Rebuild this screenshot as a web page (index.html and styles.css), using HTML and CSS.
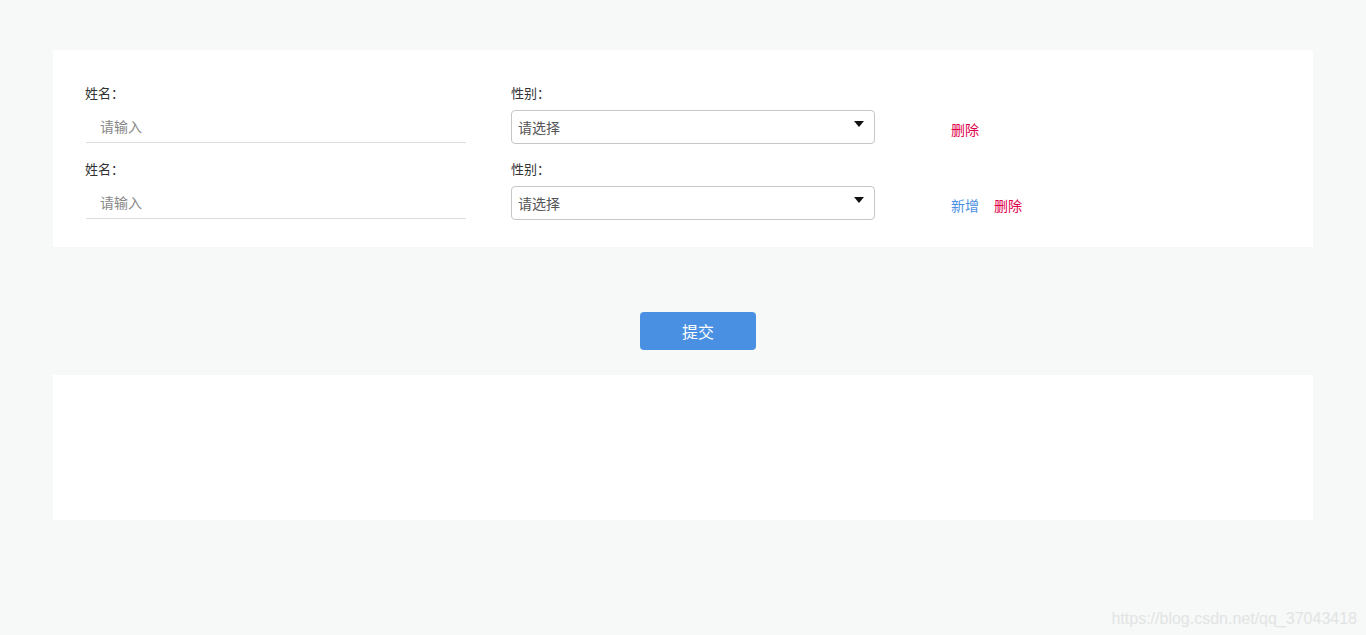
FILE: index.html
```html
<!DOCTYPE html>
<html lang="zh">
<head>
<meta charset="utf-8">
<title>表单</title>
<link rel="stylesheet" href="styles.css">
</head>
<body>
<div class="page">
  <div class="card form-card">
    <div class="row">
      <div class="field name-field">
        <div class="label">姓名：</div>
        <div class="text-input">请输入</div>
      </div>
      <div class="field sex-field">
        <div class="label">性别：</div>
        <div class="select">
          <span>请选择</span>
          <svg class="caret" width="10" height="6" viewBox="0 0 10 6"><path d="M0 0H10L5 6Z" fill="#111"/></svg>
        </div>
      </div>
      <div class="actions">
        <a class="link del">删除</a>
      </div>
    </div>
    <div class="row">
      <div class="field name-field">
        <div class="label">姓名：</div>
        <div class="text-input">请输入</div>
      </div>
      <div class="field sex-field">
        <div class="label">性别：</div>
        <div class="select">
          <span>请选择</span>
          <svg class="caret" width="10" height="6" viewBox="0 0 10 6"><path d="M0 0H10L5 6Z" fill="#111"/></svg>
        </div>
      </div>
      <div class="actions">
        <a class="link add">新增</a>
        <a class="link del">删除</a>
      </div>
    </div>
  </div>
  <div class="submit-bar">
    <button class="submit">提交</button>
  </div>
  <div class="card result-card"></div>
</div>
<div class="watermark">https://blog.csdn.net/qq_37043418</div>
</body>
</html>
```
FILE: styles.css
```css
html, body {
  margin: 0;
  padding: 0;
  background: #f7f8f8;
  font-family: "Noto Sans CJK SC", "Microsoft YaHei", sans-serif;
  font-size: 13px;
  color: #333;
}
.page {
  padding: 50px 53px 0 53px;
}
.card {
  background: #fff;
}
.form-card {
  padding: 34px 32px 27px 32px;
  display: flex;
  flex-direction: column;
  gap: 16px;
}
.row {
  display: flex;
  align-items: flex-end;
}
.field {
  display: flex;
  flex-direction: column;
}
.label {
  height: 18px;
  line-height: 18px;
  margin-bottom: 8px;
  color: #333;
}
.name-field {
  width: 381px;
  margin-right: 45px;
}
.text-input {
  margin-left: 1px;
  margin-bottom: 1px;
  height: 33px;
  line-height: 32px;
  box-sizing: border-box;
  padding-left: 14px;
  border-bottom: 1px solid #dcdcdc;
  color: #888;
  font-size: 14px;
}
.sex-field {
  width: 364px;
  margin-right: 76px;
}
.select {
  height: 34px;
  box-sizing: border-box;
  border: 1px solid #c6c6c6;
  border-radius: 4px;
  display: flex;
  align-items: center;
  justify-content: space-between;
  padding: 0 10px 0 6px;
  color: #555;
  font-size: 14px;
}
.caret {
  margin-top: -6px;
}
.actions {
  display: flex;
  gap: 15px;
  height: 34px;
  align-items: center;
  padding-top: 4px;
  box-sizing: border-box;
  font-size: 14px;
}
.link {
  cursor: pointer;
}
.link.del { color: #e0004a; }
.link.add { color: #4a90e2; }
.submit-bar {
  display: flex;
  justify-content: center;
  padding: 65px 0 25px 30px;
}
.submit {
  width: 116px;
  height: 38px;
  border: none;
  border-radius: 4px;
  background: #4a90e2;
  color: #fff;
  font-family: "Noto Sans CJK SC", "Microsoft YaHei", sans-serif;
  font-size: 16px;
  padding: 0;
}
.result-card {
  height: 145px;
}
.watermark {
  position: absolute;
  right: 9px;
  bottom: 7px;
  font-family: "Liberation Sans", Arial, sans-serif;
  font-size: 16px;
  color: #e2e4e4;
}
```
